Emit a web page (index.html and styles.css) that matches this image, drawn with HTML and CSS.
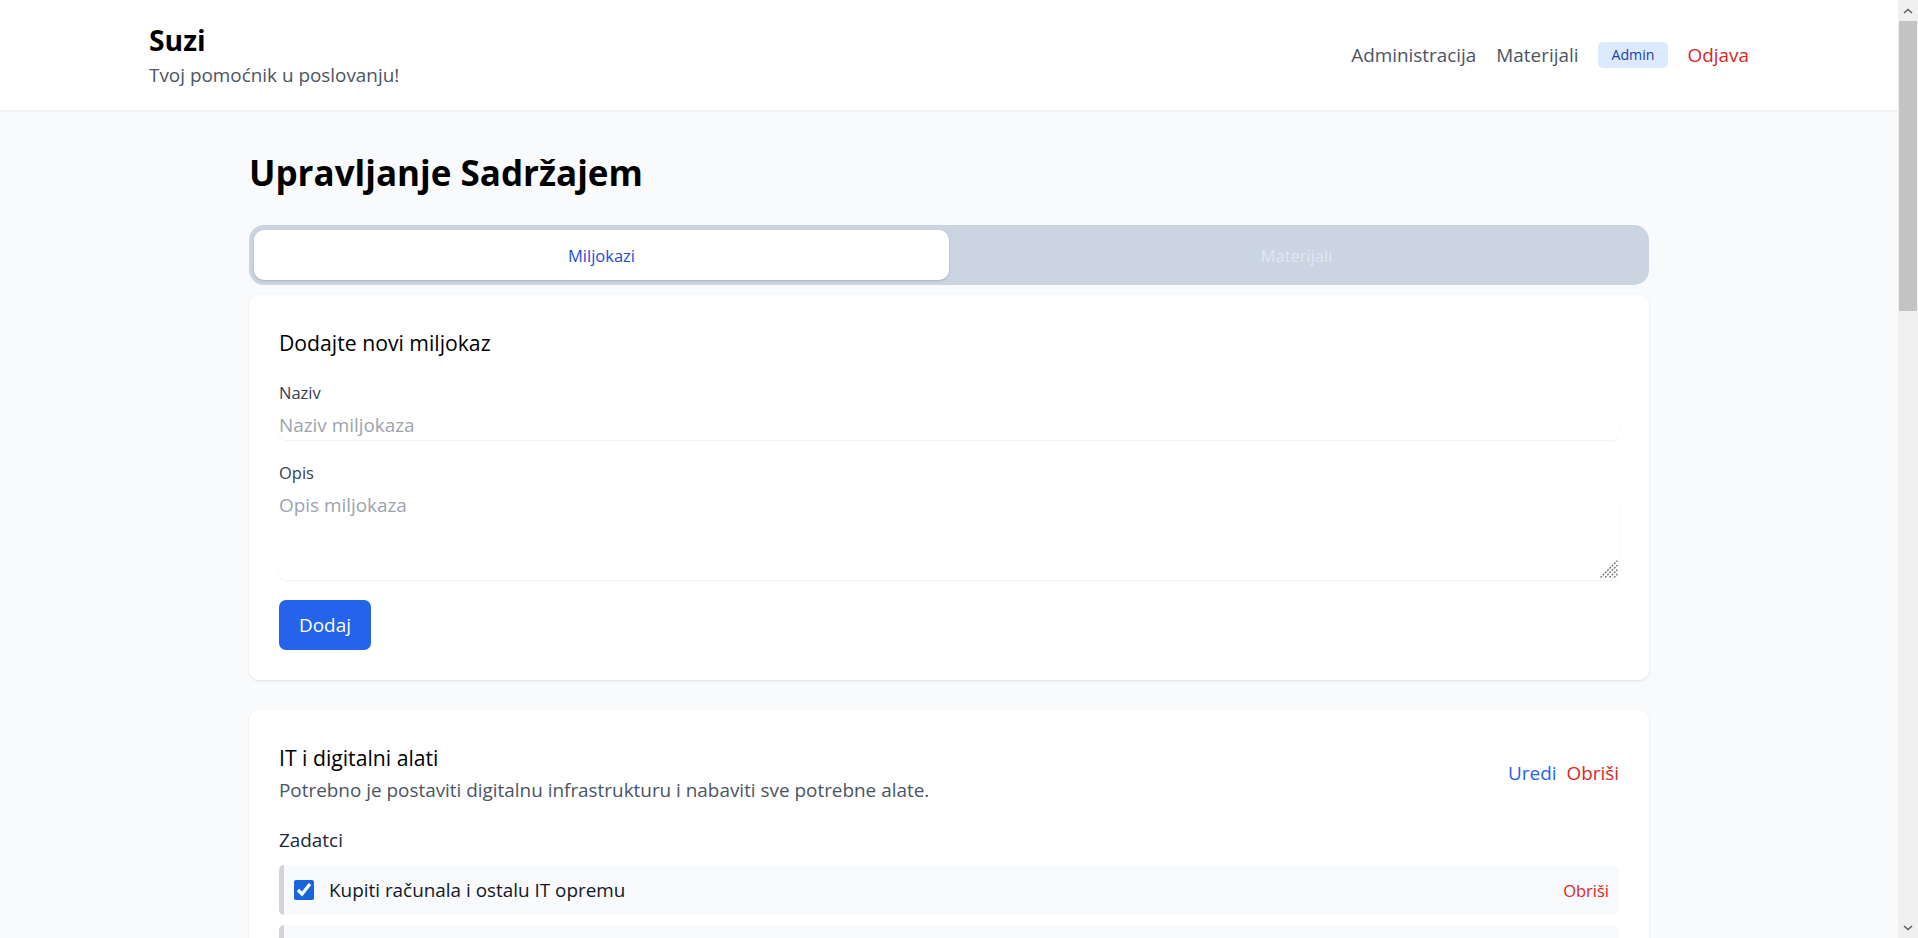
FILE: index.html
```html
<!DOCTYPE html>
<html lang="hr">
<head>
<meta charset="utf-8">
<title>Suzi – Upravljanje Sadržajem</title>
<link rel="stylesheet" href="styles.css">
</head>
<body>
<header class="site-header">
  <div class="header-inner">
    <div class="brand">
      <div class="brand-name">Suzi</div>
      <div class="brand-tagline">Tvoj pomoćnik u poslovanju!</div>
    </div>
    <nav class="nav">
      <a class="nav-link" href="#">Administracija</a>
      <a class="nav-link" href="#">Materijali</a>
      <span class="badge">Admin</span>
      <a class="nav-link logout" href="#">Odjava</a>
    </nav>
  </div>
</header>

<main class="main">
  <h1 class="page-title">Upravljanje Sadržajem</h1>

  <div class="tabs">
    <button class="tab active">Miljokazi</button>
    <button class="tab">Materijali</button>
  </div>

  <section class="card">
    <h2 class="card-title">Dodajte novi miljokaz</h2>
    <div class="field">
      <label class="label">Naziv</label>
      <input class="input" type="text" placeholder="Naziv miljokaza">
    </div>
    <div class="field">
      <label class="label">Opis</label>
      <div class="textarea-wrap">
        <textarea class="textarea" rows="3" placeholder="Opis miljokaza"></textarea>
        <svg class="resize-handle" width="18" height="18" viewBox="0 0 18 18" aria-hidden="true">
          <path d="M0.5 17.5 L17.5 0.5 M5 17.5 L17.5 5 M9.5 17.5 L17.5 9.5 M14 17.5 L17.5 14" stroke="#6e6e6e" stroke-width="1.3" stroke-dasharray="2 1.2" fill="none"/>
        </svg>
      </div>
    </div>
    <button class="btn-primary">Dodaj</button>
  </section>

  <section class="card">
    <div class="milestone-head">
      <div>
        <h3 class="milestone-title">IT i digitalni alati</h3>
        <p class="milestone-desc">Potrebno je postaviti digitalnu infrastrukturu i nabaviti sve potrebne alate.</p>
      </div>
      <div class="actions">
        <button class="link link-blue">Uredi</button>
        <button class="link link-red">Obriši</button>
      </div>
    </div>
    <h4 class="tasks-title">Zadatci</h4>
    <ul class="tasks">
      <li class="task">
        <label class="task-label"><input class="checkbox" type="checkbox" checked><span>Kupiti računala i ostalu IT opremu</span></label>
        <button class="link link-red small">Obriši</button>
      </li>
      <li class="task">
        <label class="task-label"><input class="checkbox" type="checkbox"><span>Postaviti web stranicu tvrtke</span></label>
        <button class="link link-red small">Obriši</button>
      </li>
      <li class="task">
        <label class="task-label"><input class="checkbox" type="checkbox"><span>Otvoriti poslovne e-mail adrese</span></label>
        <button class="link link-red small">Obriši</button>
      </li>
    </ul>
  </section>

  <section class="card">
    <div class="milestone-head">
      <div>
        <h3 class="milestone-title">Registracija tvrtke</h3>
        <p class="milestone-desc">Potrebno je registrirati tvrtku i ishoditi sve potrebne dozvole.</p>
      </div>
      <div class="actions">
        <button class="link link-blue">Uredi</button>
        <button class="link link-red">Obriši</button>
      </div>
    </div>
    <h4 class="tasks-title">Zadatci</h4>
    <ul class="tasks">
      <li class="task">
        <label class="task-label"><input class="checkbox" type="checkbox" checked><span>Odabrati pravni oblik tvrtke</span></label>
        <button class="link link-red small">Obriši</button>
      </li>
      <li class="task">
        <label class="task-label"><input class="checkbox" type="checkbox"><span>Prijaviti tvrtku u sudski registar</span></label>
        <button class="link link-red small">Obriši</button>
      </li>
      <li class="task">
        <label class="task-label"><input class="checkbox" type="checkbox"><span>Otvoriti poslovni račun u banci</span></label>
        <button class="link link-red small">Obriši</button>
      </li>
    </ul>
  </section>

  <section class="card">
    <div class="milestone-head">
      <div>
        <h3 class="milestone-title">Financije i računovodstvo</h3>
        <p class="milestone-desc">Potrebno je organizirati vođenje poslovnih knjiga i financijsko planiranje.</p>
      </div>
      <div class="actions">
        <button class="link link-blue">Uredi</button>
        <button class="link link-red">Obriši</button>
      </div>
    </div>
    <h4 class="tasks-title">Zadatci</h4>
    <ul class="tasks">
      <li class="task">
        <label class="task-label"><input class="checkbox" type="checkbox"><span>Odabrati knjigovodstveni servis</span></label>
        <button class="link link-red small">Obriši</button>
      </li>
      <li class="task">
        <label class="task-label"><input class="checkbox" type="checkbox"><span>Izraditi financijski plan za prvu godinu</span></label>
        <button class="link link-red small">Obriši</button>
      </li>
    </ul>
  </section>

  <section class="card">
    <div class="milestone-head">
      <div>
        <h3 class="milestone-title">Marketing i prodaja</h3>
        <p class="milestone-desc">Potrebno je izgraditi prepoznatljivost brenda i pronaći prve kupce.</p>
      </div>
      <div class="actions">
        <button class="link link-blue">Uredi</button>
        <button class="link link-red">Obriši</button>
      </div>
    </div>
    <h4 class="tasks-title">Zadatci</h4>
    <ul class="tasks">
      <li class="task">
        <label class="task-label"><input class="checkbox" type="checkbox"><span>Izraditi logotip i vizualni identitet</span></label>
        <button class="link link-red small">Obriši</button>
      </li>
      <li class="task">
        <label class="task-label"><input class="checkbox" type="checkbox"><span>Otvoriti profile na društvenim mrežama</span></label>
        <button class="link link-red small">Obriši</button>
      </li>
    </ul>
  </section>
</main>

<div class="scrollbar" aria-hidden="true">
  <div class="scroll-btn">
    <svg width="10" height="6" viewBox="0 0 10 6"><path d="M1 5 L5 1.5 L9 5" stroke="#5f5f5f" stroke-width="1.6" fill="none"/></svg>
  </div>
  <div class="scroll-thumb"></div>
  <div class="scroll-btn scroll-btn-down">
    <svg width="10" height="6" viewBox="0 0 10 6"><path d="M1 1 L5 4.5 L9 1" stroke="#5f5f5f" stroke-width="1.6" fill="none"/></svg>
  </div>
</div>
</body>
</html>
```

FILE: styles.css
```css
body {
  margin: 0 20px 0 0;
  background: #f9fafb;
  font-family: "Open Sans", "Noto Sans", sans-serif;
  font-size: 18.9px;
  line-height: 30px;
  color: #111827;
}

button {
  font-family: inherit;
  cursor: pointer;
}

/* Fake browser scrollbar (overlay on the right edge) */
.scrollbar {
  position: fixed;
  top: 0;
  right: 0;
  width: 20px;
  height: 100vh;
  background: #f0f0f0;
  display: flex;
  flex-direction: column;
  z-index: 10;
}

.scroll-btn {
  height: 21px;
  display: flex;
  align-items: center;
  justify-content: center;
  flex: none;
}

.scroll-btn-down {
  margin-top: auto;
}

.scroll-thumb {
  height: 290px;
  margin: 0 1px;
  background: #c3c3c3;
  flex: none;
}

/* Header */
.site-header {
  background: #ffffff;
  box-shadow: 0 1px 2px rgba(0, 0, 0, 0.06);
  position: relative;
}

.header-inner {
  max-width: 1600px;
  margin: 0 auto;
  padding: 20px 0;
  display: flex;
  justify-content: space-between;
  align-items: center;
}

.brand-name {
  font-size: 28.3px;
  line-height: 40px;
  font-weight: 700;
  color: #000000;
}

.brand-tagline {
  font-size: 18.9px;
  line-height: 30px;
  color: #4b5563;
}

.nav {
  display: flex;
  align-items: center;
  gap: 20px;
}

.nav-link {
  font-size: 18.9px;
  line-height: 30px;
  color: #4b5563;
  text-decoration: none;
}

.logout {
  color: #dc2626;
}

.badge {
  font-size: 14.2px;
  line-height: 20px;
  padding: 3px 13px;
  background: #dbeafe;
  color: #1e40af;
  border-radius: 5px;
}

/* Main */
.main {
  max-width: 1400px;
  margin: 0 auto;
  padding: 40px 0;
}

.page-title {
  margin: 0 0 30px;
  font-size: 35px;
  line-height: 45px;
  font-weight: 700;
  color: #000000;
}

.tabs {
  display: flex;
  padding: 5px;
  background: #cbd4e1;
  border-radius: 15px;
  margin-bottom: 10px;
}

.tab {
  flex: 1;
  border: 0;
  background: transparent;
  font-size: 16.5px;
  line-height: 25px;
  padding: 12.5px 0;
  border-radius: 10px;
  color: #dfe7f6;
}

.tab.active {
  background: #ffffff;
  color: #1d4ed8;
  box-shadow: 0 1px 3px rgba(0, 0, 0, 0.12), 0 1px 2px rgba(0, 0, 0, 0.06);
}

.card {
  background: #ffffff;
  border-radius: 10px;
  box-shadow: 0 1px 3px rgba(0, 0, 0, 0.08), 0 1px 2px rgba(0, 0, 0, 0.04);
  padding: 30px;
  margin-bottom: 30px;
}

.card-title {
  margin: 0 0 20px;
  font-size: 21.2px;
  line-height: 35px;
  font-weight: 500;
  color: #000000;
}

.field {
  margin-bottom: 20px;
}

.label {
  display: block;
  font-size: 16.5px;
  line-height: 25px;
  font-weight: 400;
  color: #374151;
}

.input,
.textarea {
  display: block;
  width: 100%;
  box-sizing: border-box;
  margin-top: 5px;
  border: 0;
  padding: 0;
  font-family: inherit;
  font-size: 18.9px;
  line-height: 30px;
  color: #111827;
  background: #ffffff;
  border-radius: 7px;
  box-shadow: 0 1px 2px rgba(0, 0, 0, 0.06);
  outline: none;
}

.input {
  height: 30px;
}

.textarea-wrap {
  position: relative;
}

.textarea {
  height: 90px;
  resize: none;
}

.resize-handle {
  position: absolute;
  right: 1px;
  bottom: 2px;
}

.input::placeholder,
.textarea::placeholder {
  color: #9ca3af;
}

.btn-primary {
  display: block;
  background: #2563eb;
  color: #ffffff;
  border: 0;
  border-radius: 7px;
  padding: 10px 20px;
  font-size: 18.9px;
  line-height: 30px;
}

/* Milestones */
.milestone-head {
  display: flex;
  justify-content: space-between;
  align-items: center;
}

.milestone-title {
  margin: 0;
  font-size: 21.2px;
  line-height: 35px;
  font-weight: 400;
  color: #000000;
}

.milestone-desc {
  margin: 0;
  font-size: 18.9px;
  line-height: 30px;
  color: #4b5563;
}

.actions {
  display: flex;
  gap: 10px;
}

.link {
  border: 0;
  background: none;
  padding: 0;
  font-size: 18.9px;
  line-height: 30px;
}

.link.small {
  font-size: 16.5px;
  line-height: 25px;
}

.link-blue {
  color: #2563eb;
}

.link-red {
  color: #dc2626;
}

.tasks-title {
  margin: 20px 0 10px;
  font-size: 18.9px;
  line-height: 30px;
  font-weight: 400;
  color: #1f2937;
}

.tasks {
  list-style: none;
  margin: 0;
  padding: 0;
  display: flex;
  flex-direction: column;
  gap: 10px;
}

.task {
  display: flex;
  justify-content: space-between;
  align-items: center;
  background: #f9fafb;
  border-left: 5px solid #d1d5db;
  border-radius: 5px;
  padding: 10px;
}

.task-label {
  display: flex;
  align-items: center;
  gap: 15px;
  font-size: 18.9px;
  line-height: 30px;
  color: #111827;
}

.checkbox {
  width: 20px;
  height: 20px;
  margin: 0;
  accent-color: #1766db;
}
```
